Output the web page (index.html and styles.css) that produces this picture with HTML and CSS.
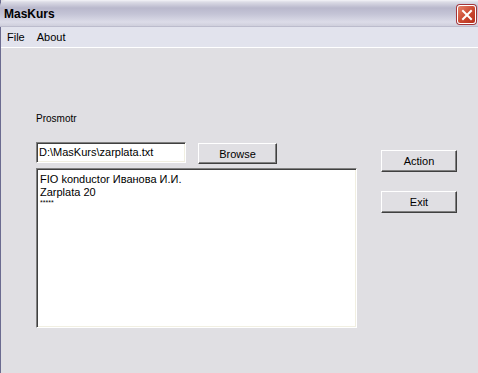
FILE: index.html
```html
<!doctype html>
<html>
<head>
	<title>MasKurs</title>
	<link rel="stylesheet" href="styles.css">
</head>
<body>
	<div class="window">
		<div class="titlebar">
			<span class="title">MasKurs</span>
			<span class="close">
				<svg width="14" height="14" viewBox="0 0 14 14"><path d="M3 3 L11 11 M11 3 L3 11" stroke="#fff" stroke-width="2" stroke-linecap="square"/></svg>
			</span>
		</div>
		<div class="menubar">
			<span class="menu-item">File</span>
			<span class="menu-item">About</span>
		</div>
		<div class="client">
			<div class="left">
				<div class="label">Prosmotr</div>
				<div class="file-row">
					<div class="field">D:\MasKurs\zarplata.txt</div>
					<div class="button browse">Browse</div>
				</div>
				<div class="memo">
					<div>FIO konductor Иванова И.И.</div>
					<div>Zarplata 20</div>
					<div class="stars">*****</div>
				</div>
			</div>
			<div class="right">
				<div class="button">Action</div>
				<div class="button">Exit</div>
			</div>
		</div>
	</div>
</body>
</html>
```

FILE: styles.css
```css
body {
	margin: 0;
	width: 478px;
	height: 373px;
	overflow: hidden;
	background: #e0dfe3;
	font-family: "Liberation Sans", Arial, sans-serif;
	font-size: 11px;
	color: #000;
}

.window {
	height: 373px;
	border-left: 1px solid #6b6b90;
	box-sizing: border-box;
	background: #e0dfe3;
}

.titlebar {
	height: 27px;
	display: flex;
	align-items: center;
	justify-content: space-between;
	padding: 0 2px 0 4px;
	margin-left: -1px;
	background: linear-gradient(#f4f4f8 0px, #dcdce6 2px, #b9b8cc 8px, #c4c4d6 14px, #dcdce8 22px, #cfcfdc 26px, #a9a9bd 27px);
	border-top-left-radius: 6px;
}

.title {
	font-weight: bold;
	font-size: 12px;
	color: #000;
	margin-top: 1px;
}

.close {
	width: 19px;
	height: 19px;
	margin-top: 2px;
	border: 1px solid #fff;
	border-radius: 3px;
	background: linear-gradient(135deg, #e6836a, #cc4b33 50%, #b6301c);
	display: flex;
	align-items: center;
	justify-content: center;
	box-sizing: border-box;
	box-shadow: 0 0 0 1px #a3353a;
}

.menubar {
	height: 20px;
	display: flex;
	align-items: center;
	padding-left: 6px;
	background: #e2e3ed;
	border-bottom: 1px solid #fff;
}

.menu-item {
	margin-right: 12px;
}

.client {
	display: flex;
	padding: 65px 0 0 35px;
	font-size: 10px;
}

.left {
	width: 321px;
}

.label {
	height: 12px;
	line-height: 12px;
}

.file-row {
	display: flex;
	align-items: flex-start;
	margin-top: 17px;
}

.field {
	width: 150px;
	height: 21px;
	box-sizing: border-box;
	background: #fff;
	border-top: 1px solid #808080;
	border-left: 1px solid #808080;
	border-right: 1px solid #fff;
	border-bottom: 1px solid #fff;
	box-shadow: inset 1px 1px 0 #404040, inset -1px -1px 0 #f1efe2;
	padding: 3px 2px 0;
	line-height: 13px;
	font-size: 11px;
}

.button {
	width: 76px;
	height: 22px;
	box-sizing: border-box;
	border-top: 1px solid #fff;
	border-left: 1px solid #fff;
	border-right: 1px solid #404040;
	border-bottom: 1px solid #404040;
	box-shadow: inset -1px -1px 0 #808080;
	background: #e0dfe3;
	display: flex;
	align-items: center;
	justify-content: center;
	font-size: 11px;
}

.browse {
	width: 79px;
	height: 21px;
	margin-left: 12px;
	margin-top: 1px;
}

.memo {
	width: 321px;
	height: 160px;
	box-sizing: border-box;
	margin-top: 4px;
	background: #fff;
	border-top: 1px solid #808080;
	border-left: 1px solid #808080;
	border-right: 1px solid #fff;
	border-bottom: 1px solid #fff;
	box-shadow: inset 1px 1px 0 #404040, inset -1px -1px 0 #f1efe2;
	padding: 4px 3px;
	line-height: 13px;
	font-size: 11px;
}

.stars {
	font-size: 7px;
	line-height: 8px;
}

.right {
	display: flex;
	flex-direction: column;
	gap: 19px;
	margin-left: 24px;
	padding-top: 37px;
}
```
